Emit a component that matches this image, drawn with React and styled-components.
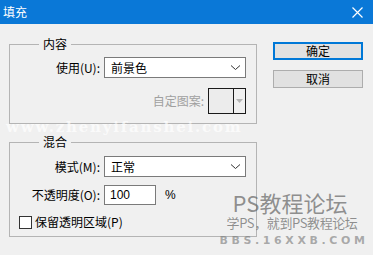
import React from "react";
import styled, { createGlobalStyle } from "styled-components";

const Global = createGlobalStyle`
  html, body { margin: 0; padding: 0; background: #f0f0f0; }
  * { box-sizing: border-box; }
  body { font-family: "Noto Sans CJK SC", "Liberation Sans", sans-serif; font-size: 12px; color: #000; }
`;

const Window = styled.div`
  position: relative;
  width: 373px;
  height: 255px;
  background: #f0f0f0;
  display: flex;
  flex-direction: column;
  overflow: hidden;
`;

const TitleBar = styled.div`
  height: 24px;
  background: #0a78d7;
  color: #fff;
  display: flex;
  align-items: center;
  justify-content: space-between;
  padding: 0 10px 0 3px;
  font-size: 12px;
  line-height: 16px;
`;

const Body = styled.div`
  display: flex;
  gap: 16px;
  padding: 12px 10px 0 9px;
`;

const LeftCol = styled.div`
  width: 248px;
  display: flex;
  flex-direction: column;
  gap: 10px;
`;

const Group = styled.fieldset`
  margin: 0;
  border: 1px solid #b4b4b4;
  padding: ${(p) => p.$pt}px 10px ${(p) => p.$pb}px 9px;
  display: flex;
  flex-direction: column;
  gap: ${(p) => p.$gap}px;
  min-width: 0;
`;

const Legend = styled.legend`
  margin-left: 20px;
  padding: 0 4px;
  line-height: 16px;
  font-size: 12px;
`;

const Row = styled.div`
  display: grid;
  grid-template-columns: 81px auto auto 1fr;
  column-gap: 4px;
  align-items: center;
`;

const Label = styled.span`
  text-align: right;
  white-space: nowrap;
  line-height: 16px;
  color: ${(p) => (p.$disabled ? "#a0a0a0" : "#000")};
`;

const Select = styled.div`
  width: 142px;
  height: 21px;
  background: #fff;
  border: 1px solid #7a7a7a;
  display: flex;
  align-items: center;
  justify-content: space-between;
  padding: 0 4px 0 6px;
  line-height: 16px;
`;

const PatternRow = styled.div`
  display: flex;
  justify-content: flex-end;
  align-items: center;
  gap: 4px;
`;

const Pattern = styled.div`
  width: 38px;
  height: 26px;
  border: 1px solid #1a1a1a;
  display: grid;
  grid-template-columns: 25px 1fr;
  background: #f0f0f0;
`;

const PatternSwatch = styled.div`
  border-right: 1px solid #1a1a1a;
  background: #ececec;
`;

const PatternArrow = styled.div`
  display: flex;
  align-items: center;
  justify-content: center;
`;

const Input = styled.div`
  width: 52px;
  height: 20px;
  background: #fff;
  border: 1px solid #7a7a7a;
  padding: 0 5px;
  display: flex;
  align-items: center;
  line-height: 16px;
  font-family: "Liberation Sans", "Noto Sans CJK SC", sans-serif;
`;

const Unit = styled.span`
  margin-left: 5px;
  line-height: 16px;
  font-family: "Liberation Sans", sans-serif;
`;

const CheckRow = styled.label`
  display: flex;
  align-items: center;
  gap: 3px;
  margin-top: 1px;
  line-height: 16px;
`;

const Box = styled.span`
  width: 13px;
  height: 13px;
  border: 1px solid #333;
  background: #fff;
`;

const Buttons = styled.div`
  width: 90px;
  padding-top: 6px;
  display: flex;
  flex-direction: column;
  gap: 10px;
`;

const Button = styled.button`
  height: 18px;
  width: 90px;
  padding: 0;
  font: inherit;
  font-size: 12px;
  line-height: 14px;
  color: #000;
  background: #e1e1e1;
  border: ${(p) => (p.$default ? "2px solid #0078d7" : "1px solid #adadad")};
`;

const Watermark = styled.div`
  position: absolute;
  left: 221px;
  top: 190px;
  width: 142px;
  display: flex;
  flex-direction: column;
  align-items: center;
  color: rgba(105, 105, 105, 0.72);
  pointer-events: none;
`;

const WmTitle = styled.div`
  font-size: 22px;
  line-height: 24px;
  margin-left: -4px;
`;

const WmSub = styled.div`
  font-size: 13px;
  line-height: 16px;
  letter-spacing: -0.4px;
  margin-top: 1px;
`;

const WmUrl = styled.div`
  font-family: "DejaVu Sans", sans-serif;
  font-weight: bold;
  font-size: 11px;
  line-height: 13px;
  letter-spacing: 3.6px;
  margin-top: 3px;
  margin-right: -4px;
  color: rgba(120, 120, 120, 0.6);
`;

const SiteMark = styled.div`
  position: absolute;
  left: 6px;
  top: 120px;
  font-family: "DejaVu Serif", serif;
  font-weight: bold;
  font-size: 15px;
  line-height: 14px;
  letter-spacing: 1.8px;
  color: rgba(255, 255, 255, 0.7);
  pointer-events: none;
  white-space: nowrap;
`;

const Chevron = () => (
  <svg width="11" height="7" viewBox="0 0 11 7">
    <path d="M1 1.5 L5.5 5.5 L10 1.5" fill="none" stroke="#333" strokeWidth="1" />
  </svg>
);

const Close = () => (
  <svg width="11" height="11" viewBox="0 0 11 11">
    <path d="M0.5 0.5 L10.5 10.5 M10.5 0.5 L0.5 10.5" stroke="#fff" strokeWidth="1.2" />
  </svg>
);

export default function App() {
  return (
    <>
      <Global />
      <Window>
        <TitleBar>
          <span>填充</span>
          <Close />
        </TitleBar>
        <Body>
          <LeftCol>
            <Group $pt={5} $pb={9} $gap={10}>
              <Legend>内容</Legend>
              <Row>
                <Label>使用(U):</Label>
                <Select>
                  <span>前景色</span>
                  <Chevron />
                </Select>
              </Row>
              <PatternRow>
                <Label $disabled>自定图案:</Label>
                <Pattern>
                  <PatternSwatch />
                  <PatternArrow>
                    <svg width="7" height="4" viewBox="0 0 7 4">
                      <path d="M0 0 L7 0 L3.5 4 Z" fill="#b5b5b5" />
                    </svg>
                  </PatternArrow>
                </Pattern>
              </PatternRow>
            </Group>
            <Group $pt={6} $pb={6} $gap={8}>
              <Legend>混合</Legend>
              <Row>
                <Label>模式(M):</Label>
                <Select>
                  <span>正常</span>
                  <Chevron />
                </Select>
              </Row>
              <Row>
                <Label>不透明度(O):</Label>
                <Input>100</Input>
                <Unit>%</Unit>
              </Row>
              <CheckRow>
                <Box />
                <span>保留透明区域(P)</span>
              </CheckRow>
            </Group>
          </LeftCol>
          <Buttons>
            <Button $default>确定</Button>
            <Button>取消</Button>
          </Buttons>
        </Body>
        <SiteMark>www.zhenyifanshei.com</SiteMark>
        <Watermark>
          <WmTitle>PS教程论坛</WmTitle>
          <WmSub>学PS，就到PS教程论坛</WmSub>
          <WmUrl>BBS.16XXB.COM</WmUrl>
        </Watermark>
      </Window>
    </>
  );
}
